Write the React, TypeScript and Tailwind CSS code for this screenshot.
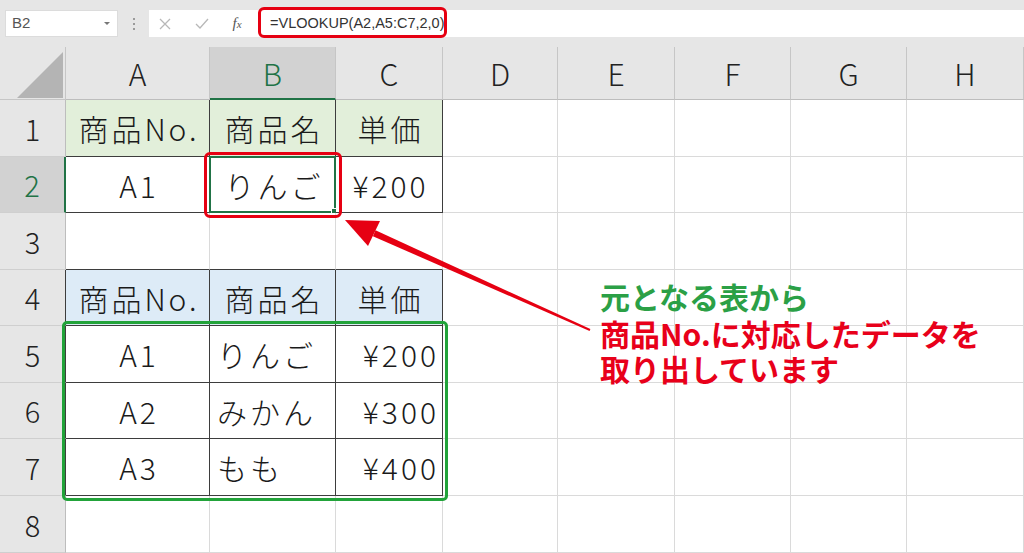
import React from "react";

const COLS = ["A", "B", "C", "D", "E", "F", "G", "H"];

type Cell = { text: string; align?: "center" | "left" | "right" };

// rows 1..8 (index 0..7), only A..C hold values
const DATA: Cell[][] = [
  [{ text: "商品No." }, { text: "商品名" }, { text: "単価" }],
  [{ text: "A1" }, { text: "りんご" }, { text: "¥200" }],
  [],
  [{ text: "商品No." }, { text: "商品名" }, { text: "単価" }],
  [{ text: "A1" }, { text: "りんご", align: "left" }, { text: "¥200", align: "right" }],
  [{ text: "A2" }, { text: "みかん", align: "left" }, { text: "¥300", align: "right" }],
  [{ text: "A3" }, { text: "もも", align: "left" }, { text: "¥400", align: "right" }],
  [],
];

const ALIGN: Record<string, string> = {
  center: "justify-center pl-[3px]",
  left: "justify-start pl-[7px]",
  right: "justify-end pr-[3px]",
};

function inTable(r: number, c: number) {
  if (c > 2) return false;
  return r === 0 || r === 1 || (r >= 3 && r <= 6);
}

function DataCell({ r, c }: { r: number; c: number }) {
  const cell = DATA[r][c];
  const table = inTable(r, c);
  const darkBottom = table || (r === 2 && c <= 2);
  let bg = "bg-white";
  if (r === 0 && c <= 2) bg = "bg-[#e2efda]";
  if (r === 3 && c <= 2) bg = "bg-[#ddebf7]";
  const right = table ? "border-r-[#3d3d3d]" : "border-r-[#dadada]";
  const bottom = darkBottom ? "border-b-[#3d3d3d]" : "border-b-[#dadada]";
  const selected = r === 1 && c === 1;
  return (
    <div
      className={`relative flex items-center border-r border-b ${right} ${bottom} ${bg} ${
        cell ? ALIGN[cell.align ?? "center"] : ""
      } text-[30px] font-light tracking-[3px] text-[#1a1a1a] leading-none`}
    >
      {cell && <span>{cell.text}</span>}
      {selected && (
        <div className="absolute -inset-[1px] border-2 border-[#217346]">
          <div className="absolute -right-[3px] -bottom-[3px] w-[6px] h-[6px] bg-[#217346] border border-white" />
        </div>
      )}
    </div>
  );
}

export default function App() {
  const font = { fontFamily: '"Noto Sans CJK JP", "Noto Sans", sans-serif' };
  return (
    <div
      className="relative w-[1024px] h-[553px] overflow-hidden bg-white select-none"
      style={font}
    >
      {/* Formula bar */}
      <div className="h-[47px] bg-[#e6e6e6] flex items-start pt-[10px] pl-[5px]">
        <div className="w-[113px] h-[27px] bg-white border border-[#dcdcdc] flex items-center justify-between pl-[6px] pr-[6px]">
          <span className="text-[15px] text-[#555]" style={{ fontFamily: '"Liberation Sans", sans-serif' }}>
            B2
          </span>
          <svg width="8" height="5" viewBox="0 0 8 5">
            <path d="M1 1 L4 4 L7 1 Z" fill="#777" />
          </svg>
        </div>
        <div className="w-[31px] h-[27px] flex flex-col items-center justify-center gap-[3px]">
          <span className="w-[2px] h-[2px] bg-[#9a9a9a]" />
          <span className="w-[2px] h-[2px] bg-[#9a9a9a]" />
          <span className="w-[2px] h-[2px] bg-[#9a9a9a]" />
        </div>
        <div className="flex-1 h-[27px] bg-white flex items-center">
          <div className="w-[32px] flex justify-center">
            <svg width="12" height="12" viewBox="0 0 12 12">
              <path d="M1 1 L11 11 M11 1 L1 11" stroke="#b8b8b8" strokeWidth="1.3" />
            </svg>
          </div>
          <div className="w-[42px] flex justify-center">
            <svg width="14" height="11" viewBox="0 0 14 11">
              <path d="M1 6 L5 10 L13 1" stroke="#b8b8b8" strokeWidth="1.3" fill="none" />
            </svg>
          </div>
          <div className="w-[28px] flex justify-center">
            <span
              className="italic text-[15px] text-[#555] leading-none"
              style={{ fontFamily: '"Liberation Serif", serif' }}
            >
              f<span className="text-[11px]">x</span>
            </span>
          </div>
          <span
            className="ml-[19px] text-[14.5px] text-[#333]"
            style={{ fontFamily: '"Liberation Sans", sans-serif' }}
          >
            =VLOOKUP(A2,A5:C7,2,0)
          </span>
        </div>
      </div>

      {/* Sheet grid */}
      <div className="grid grid-cols-[66px_144px_126px_107px_115px_117px_116px_116px_117px] grid-rows-[53px_57px_56px_57px_56px_57px_56px_57px_57px]">
        {/* corner */}
        <div className="relative bg-[#e6e6e6] border-r border-b border-[#c6c6c6]">
          <svg className="absolute left-0 top-0" width="66" height="53" viewBox="0 0 66 53">
            <path d="M17 51 L63 51 L63 5 Z" fill="#b4b4b4" />
          </svg>
        </div>
        {COLS.map((l) => (
          <div
            key={l}
            className={`flex items-center justify-center border-r border-r-[#c6c6c6] text-[30px] font-light leading-none ${
              l === "B"
                ? "bg-[#d2d2d2] text-[#217346] border-b-2 border-b-[#217346]"
                : "bg-[#e6e6e6] text-[#222] border-b border-b-[#bdbdbd]"
            }`}
          >
            {l}
          </div>
        ))}
        {DATA.map((_, r) => (
          <React.Fragment key={r}>
            <div
              className={`flex items-center justify-center border-b border-b-[#cfcfcf] text-[29px] font-light leading-none ${
                r === 1
                  ? "bg-[#d2d2d2] text-[#217346] border-r-2 border-r-[#217346]"
                  : `bg-[#e6e6e6] text-[#222] border-r ${r >= 3 && r <= 6 ? "border-r-[#3d3d3d]" : "border-r-[#bdbdbd]"}`
              }`}
            >
              {r + 1}
            </div>
            {COLS.map((_, c) => (
              <DataCell key={c} r={r} c={c} />
            ))}
          </React.Fragment>
        ))}
      </div>

      {/* Annotations */}
      <div className="absolute left-[258px] top-[7px] w-[189px] h-[31px] border-[3px] border-[#e60012] rounded-[6px]" />
      <div className="absolute left-[204px] top-[152px] w-[138px] h-[66px] border-[3px] border-[#e60012] rounded-[6px]" />
      <div className="absolute left-[62px] top-[321px] w-[386px] h-[180px] border-[3px] border-[#22a33a] rounded-[5px]" />

      <svg className="absolute left-0 top-0 pointer-events-none" width="1024" height="553" viewBox="0 0 1024 553">
        <polygon points="590.4,329.1 589.6,330.9 372.9,236.3 375.5,230.3" fill="#e60012" />
        <polygon points="345,220 380,221 368,246" fill="#e60012" />
      </svg>

      <div className="absolute left-[600px] top-[279px] font-bold text-[30px]">
        <div className="text-[#2ba046] leading-[34px]">元となる表から</div>
        <div className="text-[#e8001a] leading-[36px] mt-[2px]">商品No.に対応したデータを</div>
        <div className="text-[#e8001a] leading-[34px]">取り出しています</div>
      </div>
    </div>
  );
}
